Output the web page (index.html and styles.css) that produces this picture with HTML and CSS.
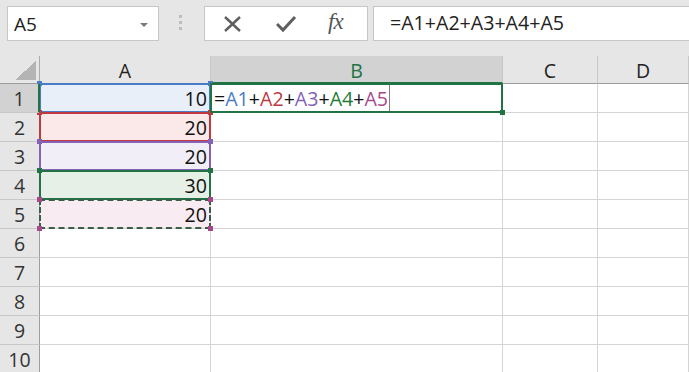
FILE: index.html
```html
<!doctype html>
<html lang="en">
  <head>
    <meta charset="UTF-8" />
    <meta name="viewport" content="width=device-width, initial-scale=1.0" />
    <title>Sheet</title>
    <link rel="stylesheet" href="styles.css">
  </head>

  <body>
    <div class="toolbar">
      <div class="name-box">
        <span>A5</span>
        <span class="caret"></span>
      </div>
      <div class="grip"><i></i><i></i><i></i></div>
      <div class="fx-buttons">
        <svg class="icon" width="20" height="20" viewBox="0 0 20 20">
          <path d="M2 3 L17 17 M17 3 L2 17" stroke="#5f5f5f" stroke-width="2.4" fill="none" />
        </svg>
        <svg class="icon" width="22" height="20" viewBox="0 0 22 20">
          <path d="M1 10 L7 16 L19 3" stroke="#5f5f5f" stroke-width="3" fill="none" />
        </svg>
        <span class="fx">fx</span>
      </div>
      <div class="formula">=A1+A2+A3+A4+A5</div>
    </div>

    <div class="sheet">
      <!-- header row -->
      <div class="corner"></div>
      <div class="col-head">A</div>
      <div class="col-head is-active">B</div>
      <div class="col-head">C</div>
      <div class="col-head">D</div>

      <div class="row-head is-active">1</div>
      <div class="cell num ref ref-1">10</div>
      <div class="cell editing">=<span class="c1">A1</span>+<span class="c2">A2</span>+<span class="c3">A3</span>+<span class="c4">A4</span>+<span class="c5">A5</span><span class="cursor"></span></div>
      <div class="cell"></div>
      <div class="cell"></div>

      <div class="row-head">2</div>
      <div class="cell num ref ref-2">20</div>
      <div class="cell"></div>
      <div class="cell"></div>
      <div class="cell"></div>

      <div class="row-head">3</div>
      <div class="cell num ref ref-3">20</div>
      <div class="cell"></div>
      <div class="cell"></div>
      <div class="cell"></div>

      <div class="row-head">4</div>
      <div class="cell num ref ref-4">30</div>
      <div class="cell"></div>
      <div class="cell"></div>
      <div class="cell"></div>

      <div class="row-head">5</div>
      <div class="cell num ref ref-5">20</div>
      <div class="cell"></div>
      <div class="cell"></div>
      <div class="cell"></div>

      <div class="row-head">6</div>
      <div class="cell"></div>
      <div class="cell"></div>
      <div class="cell"></div>
      <div class="cell"></div>

      <div class="row-head">7</div>
      <div class="cell"></div>
      <div class="cell"></div>
      <div class="cell"></div>
      <div class="cell"></div>

      <div class="row-head">8</div>
      <div class="cell"></div>
      <div class="cell"></div>
      <div class="cell"></div>
      <div class="cell"></div>

      <div class="row-head">9</div>
      <div class="cell"></div>
      <div class="cell"></div>
      <div class="cell"></div>
      <div class="cell"></div>

      <div class="row-head">10</div>
      <div class="cell"></div>
      <div class="cell"></div>
      <div class="cell"></div>
      <div class="cell"></div>
    </div>
  </body>
</html>
```

FILE: styles.css
```css
body {
  margin: 0;
  background: #fff;
  font-family: "Open Sans", sans-serif;
  overflow: hidden;
}

/* top bar: name box + formula */
.toolbar {
  display: flex;
  align-items: flex-start;
  height: 56px;
  padding-top: 6px;
  box-sizing: border-box;
  background: #e6e6e6;
}

.name-box {
  display: flex;
  align-items: center;
  justify-content: space-between;
  margin-left: 7px;
  width: 152px;
  height: 35px;
  box-sizing: border-box;
  padding: 0 10px 0 6px;
  background: #fff;
  border: 1px solid #c6c6c6;
  font-size: 19px;
  color: #222;
}

.caret {
  width: 0;
  height: 0;
  border-left: 4px solid transparent;
  border-right: 4px solid transparent;
  border-top: 4px solid #7a7a7a;
  margin-top: 2px;
}

.grip {
  display: flex;
  flex-direction: column;
  gap: 3px;
  padding-top: 9px;
  margin-left: 20px;
  width: 25px;

  & i {
    display: block;
    width: 3px;
    height: 3px;
    background: #bdbdbd;
  }
}

.fx-buttons {
  display: flex;
  align-items: center;
  width: 164px;
  height: 35px;
  box-sizing: border-box;
  padding-left: 18px;
  background: #fff;
  border: 1px solid #c6c6c6;

  & .icon {
    display: block;
  }

  & .icon + .icon {
    margin-left: 33px;
  }
}

.fx {
  margin-left: 30px;
  font-family: "Liberation Serif", serif;
  font-style: italic;
  font-size: 23px;
  color: #555;
  letter-spacing: -1px;
  margin-top: -3px;
}

.formula {
  flex: 1;
  margin-left: 5px;
  margin-right: -2px;
  height: 35px;
  box-sizing: border-box;
  padding-left: 16px;
  background: #fff;
  border: 1px solid #c6c6c6;
  font-size: 19.6px;
  line-height: 32px;
  color: #222;
}

/* grid */
.sheet {
  display: grid;
  grid-template-columns: 40px 171px 292px 95px 1fr;
  grid-template-rows: 28px;
  grid-auto-rows: 29px;
}

.corner,
.col-head,
.row-head {
  background: #e6e6e6;
  box-sizing: border-box;
}

.corner {
  border-right: 1px solid #ababab;
  border-bottom: 1px solid #9d9d9d;
  background:
    linear-gradient(to bottom right, transparent 50%, #b4b4b4 50%) right 3px bottom 3px / 21px 19px no-repeat,
    #e6e6e6;
}

.col-head {
  border-right: 1px solid #c8c8c8;
  border-bottom: 1px solid #9d9d9d;
  text-align: center;
  font-size: 19.5px;
  line-height: 29px;
  color: #222;

  &.is-active {
    background: #d2d2d2;
    border-bottom: 2px solid #217346;
    color: #217346;
  }
}

.row-head {
  border-right: 1px solid #9d9d9d;
  border-bottom: 1px solid #c8c8c8;
  text-align: center;
  font-size: 19.5px;
  line-height: 29px;
  color: #333;

  &.is-active {
    position: relative;
    z-index: 2;
    background: #d2d2d2;
    border-right: 2px solid #217346;
  }
}

.cell {
  border-right: 1px solid #d4d4d4;
  border-bottom: 1px solid #d4d4d4;
  font-size: 19.6px;
  line-height: 29px;
  color: #111;
  white-space: nowrap;
  box-sizing: border-box;
}

.num {
  text-align: right;
  padding-right: 3px;
}

/* coloured range references */
.ref {
  position: relative;

  &::after {
    content: "";
    position: absolute;
    top: -1px;
    left: -1px;
    right: -1px;
    bottom: -1px;
    border: 2px solid var(--ref);
  }

  &::before {
    content: "";
    position: absolute;
    z-index: 1;
    top: -3px;
    left: -3px;
    width: 5px;
    height: 5px;
    background: var(--ref);
    box-shadow: 171px 0 0 var(--ref);
  }
}

.ref-1 { --ref: #4a7cc6; background: #e9eff9; }
.ref-2 { --ref: #c0393f; background: #fbe9ea; }
.ref-3 { --ref: #8462b8; background: #f1eef8; }
.ref-4 { --ref: #217346; background: #e6f0e6; }

.ref-5 {
  --ref: #a8478a;
  background: #f8ebf1;

  &::after {
    border: 2px dashed #3a5e48;
  }

  &::before {
    box-shadow: 171px 0 0 var(--ref), 0 29px 0 var(--ref), 171px 29px 0 var(--ref);
  }
}

.c1 { color: #4a7cc6; }
.c2 { color: #c0393f; }
.c3 { color: #8462b8; }
.c4 { color: #1f7a35; }
.c5 { color: #a8478a; }

/* the cell being edited */
.editing {
  position: relative;
  z-index: 3;
  padding-left: 3px;
  background: #fff;

  &::after {
    content: "";
    position: absolute;
    top: -1px;
    left: -1px;
    right: -1px;
    bottom: -1px;
    border: 2px solid #217346;
  }

  &::before {
    content: "";
    position: absolute;
    right: -3px;
    bottom: -3px;
    width: 5px;
    height: 5px;
    background: #217346;
    border: 1px solid #fff;
    border-width: 1px 0 0 1px;
  }
}

.cursor {
  display: inline-block;
  width: 1px;
  height: 27px;
  vertical-align: top;
  margin-left: 1px;
  background: #808080;
}
```
